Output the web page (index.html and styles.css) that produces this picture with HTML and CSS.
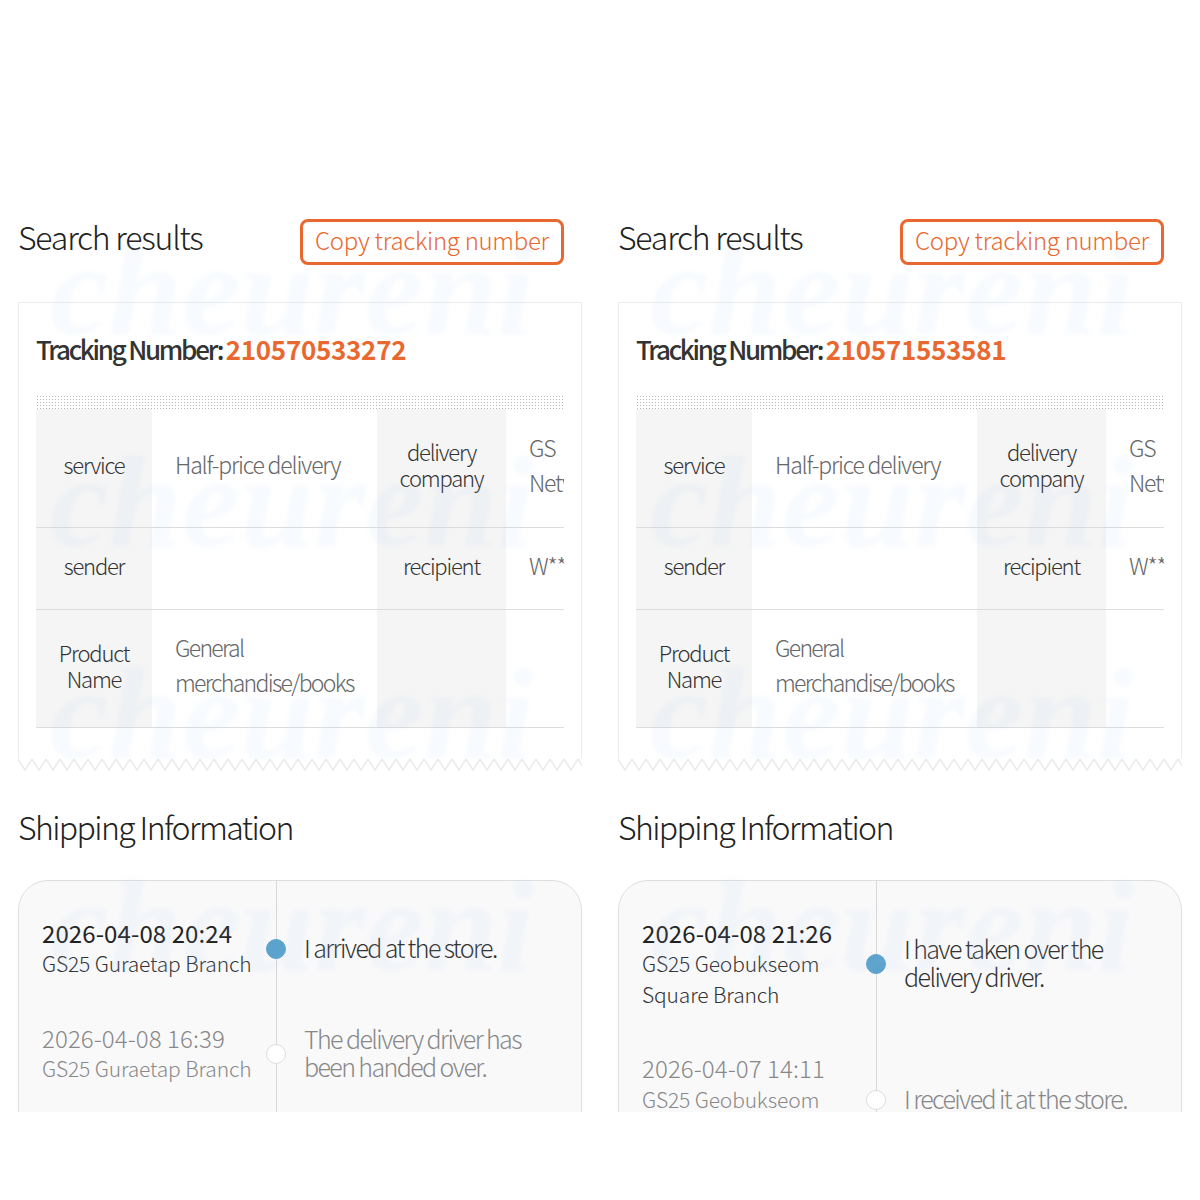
FILE: index.html
```html
<!DOCTYPE html>
<html lang='en'>
<head>
  <meta charset='UTF-8'>
  <meta name='viewport' content='width=device-width, initial-scale=1.0'>
  <title>Search results</title>
  <link rel="stylesheet" href="styles.css">
</head>
<body>
<svg class='defs' width='0' height='0'>
  <defs>
    <pattern id='wave' width='14' height='14' patternUnits='userSpaceOnUse'>
      <path d='M0 1 L7 12 L14 1' fill='none' stroke='#ebebeb' stroke-width='1.5'/>
    </pattern>
  </defs>
</svg>
<main class='page'>

  <section class='panel'>
    <header class='panel-head'>
      <h2>Search results</h2>
      <button class='copy-btn'>Copy tracking number</button>
    </header>
    <div class='receipt'>
      <h3 class='tracking'>Tracking Number: <span>210570533272</span></h3>
      <div class='dots'></div>
      <div class='table-wrap'>
        <table>
          <tr class='row-tall'>
            <th class='col-a'>service</th>
            <td class='col-b'>Half-price delivery</td>
            <th class='col-c'>delivery company</th>
            <td class='col-d'>GS<br>Network</td>
          </tr>
          <tr class='row-short'>
            <th>sender</th>
            <td></td>
            <th>recipient</th>
            <td>W***</td>
          </tr>
          <tr class='row-tall'>
            <th>Product Name</th>
            <td class='tight'>General merchandise/books</td>
            <th></th>
            <td></td>
          </tr>
        </table>
      </div>
    </div>
    <svg class='wave' width='564' height='14'><rect width='564' height='14' fill='url(#wave)'/></svg>
    <h2 class='ship-title'>Shipping Information</h2>
    <div class='timeline'>
      <div class='event current'>
        <div class='where'>
          <div class='when'>2026-04-08 20:24</div>
          <div>GS25 Guraetap Branch</div>
        </div>
        <i class='dot'></i>
        <div class='what'>I arrived at the store.</div>
      </div>
      <div class='event'>
        <div class='where'>
          <div class='when'>2026-04-08 16:39</div>
          <div>GS25 Guraetap Branch</div>
        </div>
        <i class='dot'></i>
        <div class='what'>The delivery driver has<br>been handed over.</div>
      </div>
    </div>
    <div class='watermark' aria-hidden='true'><span></span><span></span><span></span><span></span></div>
  </section>

  <section class='panel'>
    <header class='panel-head'>
      <h2>Search results</h2>
      <button class='copy-btn'>Copy tracking number</button>
    </header>
    <div class='receipt'>
      <h3 class='tracking'>Tracking Number: <span>210571553581</span></h3>
      <div class='dots'></div>
      <div class='table-wrap'>
        <table>
          <tr class='row-tall'>
            <th class='col-a'>service</th>
            <td class='col-b'>Half-price delivery</td>
            <th class='col-c'>delivery company</th>
            <td class='col-d'>GS<br>Network</td>
          </tr>
          <tr class='row-short'>
            <th>sender</th>
            <td></td>
            <th>recipient</th>
            <td>W***</td>
          </tr>
          <tr class='row-tall'>
            <th>Product Name</th>
            <td class='tight'>General merchandise/books</td>
            <th></th>
            <td></td>
          </tr>
        </table>
      </div>
    </div>
    <svg class='wave' width='564' height='14'><rect width='564' height='14' fill='url(#wave)'/></svg>
    <h2 class='ship-title'>Shipping Information</h2>
    <div class='timeline'>
      <div class='event current'>
        <div class='where'>
          <div class='when'>2026-04-08 21:26</div>
          <div>GS25 Geobukseom<br>Square Branch</div>
        </div>
        <i class='dot'></i>
        <div class='what'>I have taken over the<br>delivery driver.</div>
      </div>
      <div class='event'>
        <div class='where'>
          <div class='when'>2026-04-07 14:11</div>
          <div>GS25 Geobukseom<br>Square Branch</div>
        </div>
        <i class='dot'></i>
        <div class='what'>I received it at the store.</div>
      </div>
    </div>
    <div class='watermark' aria-hidden='true'><span></span><span></span><span></span><span></span></div>
  </section>

</main>
</body>
</html>
```

FILE: styles.css
```css
body {
    margin: 0;
    background-color: #fff;
    font-family: "Noto Sans CJK KR", "Noto Sans", sans-serif;
    color: #333;
}

.defs {
    position: absolute;
}

.page {
    display: flex;
    padding-top: 208px;
}

.panel {
    position: relative;
    width: 564px;
    height: 894px;
    padding: 10px 18px 0;
    overflow: hidden;
}

.panel-head {
    display: flex;
    justify-content: space-between;
    align-items: flex-start;
    height: 47px;
    padding-right: 18px;
}

h2 {
    margin: -2.5px 0 0;
    font-size: 32px;
    font-weight: 300;
    line-height: 40px;
    letter-spacing: -1.2px;
    color: #222;
}

.copy-btn {
    width: 264px;
    height: 46px;
    margin-top: 1px;
    padding: 0 0 6px;
    border: 3px solid #e9682f;
    border-radius: 8px;
    background-color: #fff;
    font-family: inherit;
    font-size: 24px;
    font-weight: 300;
    letter-spacing: -0.3px;
    color: #e9682f;
}

.receipt {
    margin-top: 37px;
    padding: 27px 17px 30px;
    border: 1px solid #ececec;
    border-bottom: 0;
}

.tracking {
    margin: 0;
    font-size: 26px;
    font-weight: 500;
    line-height: 38px;
    letter-spacing: -2.25px;
    color: #333;
}

.tracking span {
    font-weight: 700;
    letter-spacing: -0.3px;
    color: #e9682f;
}

.dots {
    height: 14px;
    margin-top: 27px;
    background-image: radial-gradient(#b8b8b8 0.8px, transparent 1px);
    background-size: 3px 3px;
}

.table-wrap {
    width: 528px;
    overflow: hidden;
}

table {
    width: 640px;
    border-collapse: collapse;
    table-layout: fixed;
}

tr {
    border-bottom: 1px solid #dcdcdc;
}

.row-tall {
    height: 118px;
}

.row-short {
    height: 82px;
}

th,
td {
    padding: 0 0 6px;
    font-size: 23px;
    letter-spacing: -1.2px;
}

th {
    padding-bottom: 7px;
    background-color: #f5f5f5;
    font-size: 22px;
    font-weight: 300;
    line-height: 26px;
    color: #333;
}

td {
    padding-left: 23px;
    font-weight: 300;
    line-height: 35px;
    color: #666;
}

td.tight {
    letter-spacing: -1.7px;
}

.col-a {
    width: 116px;
}

.col-b {
    width: 202px;
}

.col-c {
    width: 129px;
}

.wave {
    display: block;
}

.ship-title {
    margin-top: 34px;
    letter-spacing: -1.6px;
}

.timeline {
    position: relative;
    display: flex;
    flex-direction: column;
    gap: 44px;
    margin-top: 34px;
    height: 300px;
    padding-top: 37px;
    box-sizing: border-box;
    border: 1px solid #dedede;
    border-radius: 30px 30px 0 0;
    background-color: #f9f9fa;
}

.timeline::before {
    content: '';
    position: absolute;
    top: 0;
    bottom: 0;
    left: 257px;
    width: 1px;
    background-color: #d8d8d8;
}

.event {
    position: relative;
    display: flex;
    align-items: center;
    color: #888;
}

.where {
    width: 262px;
    padding-left: 23px;
    box-sizing: border-box;
    font-size: 21px;
    font-weight: 300;
    line-height: 30.5px;
    letter-spacing: -0.15px;
}

.when {
    font-size: 24px;
    letter-spacing: 0.1px;
}

.what {
    padding: 0 0 2px 23px;
    font-size: 25px;
    font-weight: 300;
    line-height: 28px;
    letter-spacing: -1.6px;
}

.dot {
    position: absolute;
    top: 50%;
    left: 247px;
    width: 20px;
    height: 20px;
    margin-top: -9px;
    box-sizing: border-box;
    border: 1px solid #dedede;
    border-radius: 50%;
    background-color: #fff;
}

.current {
    color: #333;
}

.current .when {
    font-weight: 400;
    color: #222;
}

.current .dot {
    border-color: #5ba3cc;
    background-color: #5ba3cc;
}

.watermark {
    position: absolute;
    top: -24px;
    left: 50px;
    display: flex;
    flex-direction: column;
    pointer-events: none;
    font-family: "Liberation Serif", serif;
    font-size: 132px;
    font-style: italic;
    font-weight: 700;
    line-height: 212px;
    color: rgba(170, 205, 240, 0.09);
    filter: blur(2px);
}

.watermark span::before {
    content: 'cheureni';
}
```
